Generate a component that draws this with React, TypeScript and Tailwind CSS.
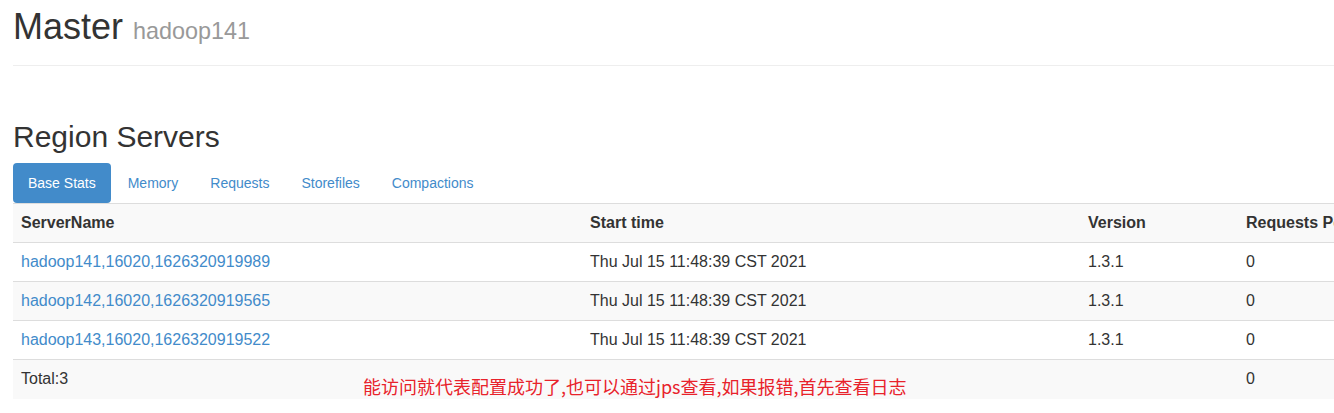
import React from "react";

const rows = [
  { name: "hadoop141,16020,1626320919989", time: "Thu Jul 15 11:48:39 CST 2021", version: "1.3.1", req: "0" },
  { name: "hadoop142,16020,1626320919565", time: "Thu Jul 15 11:48:39 CST 2021", version: "1.3.1", req: "0" },
  { name: "hadoop143,16020,1626320919522", time: "Thu Jul 15 11:48:39 CST 2021", version: "1.3.1", req: "0" },
];

export default function App() {
  const font = { fontFamily: '"Liberation Sans", Arial, Helvetica, sans-serif' };
  return (
    <div className="relative w-[1334px] h-[413px] overflow-hidden bg-white text-[#333]" style={font}>
      <div className="pl-[13px]">
        <div className="pt-[7px] pb-[9px] mb-[54px] border-b border-[#eee] w-[1400px]">
          <h1 className="text-[36px] leading-[39px] h-[39px] mb-[10px] font-normal">
            Master <span className="text-[23.4px] leading-none text-[#999]">hadoop141</span>
          </h1>
        </div>
        <h2 className="text-[30px] leading-[33px] font-normal mb-[10px]">Region Servers</h2>
        <ul className="flex text-[14px] leading-[20px]">
          <li className="h-[40px] px-[15px] py-[10px] rounded-[4px] bg-[#428bca] text-white">Base Stats</li>
          <li className="ml-[2px] h-[40px] px-[15px] py-[10px] text-[#428bca]">Memory</li>
          <li className="ml-[2px] h-[40px] px-[15px] py-[10px] text-[#428bca]">Requests</li>
          <li className="ml-[2px] h-[40px] px-[15px] py-[10px] text-[#428bca]">Storefiles</li>
          <li className="ml-[2px] h-[40px] px-[15px] py-[10px] text-[#428bca]">Compactions</li>
        </ul>
        <table className="table-fixed w-[1500px] border-collapse text-[16px] leading-[22px]">
          <colgroup>
            <col className="w-[569px]" />
            <col className="w-[498px]" />
            <col className="w-[158px]" />
            <col />
          </colgroup>
          <thead>
            <tr className="bg-[#f9f9f9] border-t border-[#ddd]">
              <th className="text-left font-bold px-2 py-2 h-[39px] whitespace-nowrap">ServerName</th>
              <th className="text-left font-bold px-2 py-2 whitespace-nowrap">Start time</th>
              <th className="text-left font-bold px-2 py-2 whitespace-nowrap">Version</th>
              <th className="text-left font-bold px-2 py-2 whitespace-nowrap">Requests Per Second</th>
            </tr>
          </thead>
          <tbody>
            {rows.map((r, i) => (
              <tr key={r.name} className={`border-t border-[#ddd] ${i % 2 === 1 ? "bg-[#f9f9f9]" : "bg-white"}`}>
                <td className="px-2 py-2 h-[39px] text-[#428bca] whitespace-nowrap">{r.name}</td>
                <td className="px-2 py-2 whitespace-nowrap">{r.time}</td>
                <td className="px-2 py-2 whitespace-nowrap">{r.version}</td>
                <td className="px-2 py-2 whitespace-nowrap">{r.req}</td>
              </tr>
            ))}
            <tr className="border-t border-[#ddd] bg-[#f9f9f9]">
              <td className="px-2 py-2 h-[39px] whitespace-nowrap">Total:3</td>
              <td className="px-2 py-2"></td>
              <td className="px-2 py-2"></td>
              <td className="px-2 py-2">0</td>
            </tr>
          </tbody>
        </table>
      </div>
      <div
        className="absolute left-[363px] top-[374px] text-[18px] leading-[24px] text-[#e8222b] whitespace-nowrap"
        style={{ fontFamily: '"Noto Sans CJK SC", "Noto Sans", sans-serif' }}
      >
        能访问就代表配置成功了,也可以通过jps查看,如果报错,首先查看日志
      </div>
    </div>
  );
}
